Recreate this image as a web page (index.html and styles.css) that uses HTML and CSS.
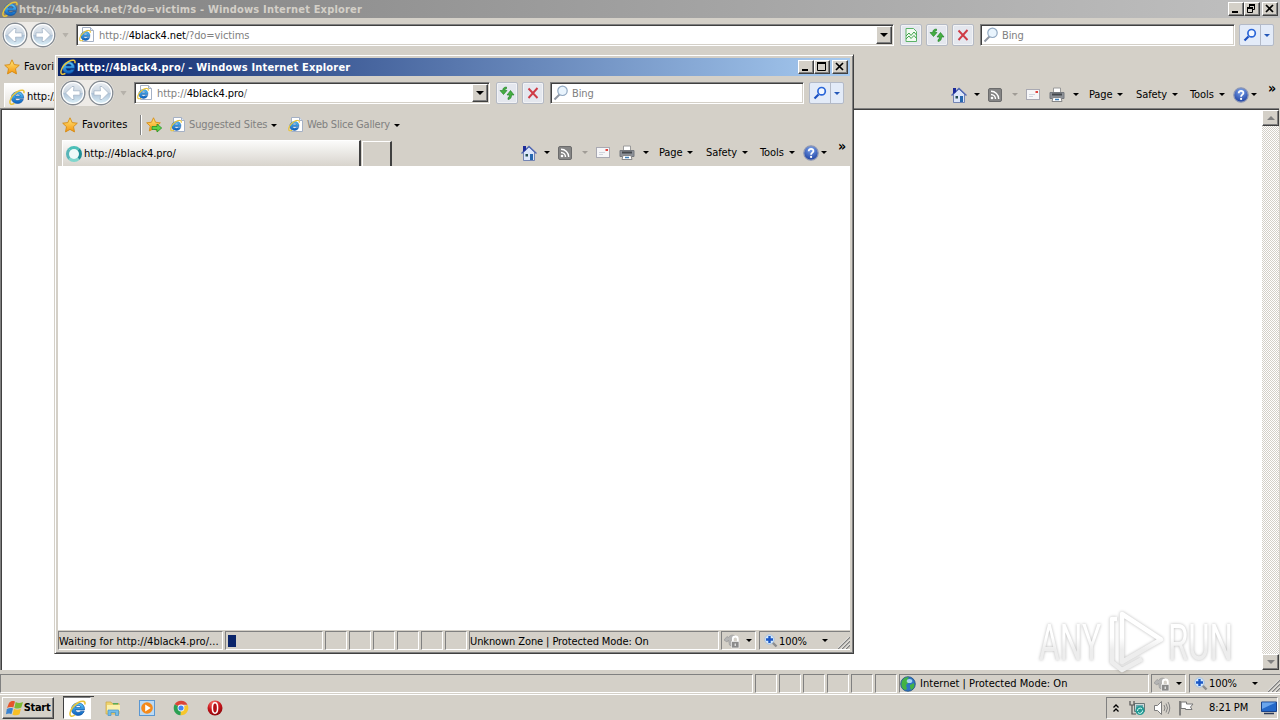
FILE: index.html
```html
<!DOCTYPE html>
<html lang="en">
<head>
  <meta charset="UTF-8">
  <title>Desktop</title>
  <link rel="stylesheet" href="styles.css">
</head>
<body>
  <!-- icons -->
  <svg class="sprite" width="0" height="0">
    <defs>
      <linearGradient id="g-ie" x1="0" y1="0" x2="0" y2="1"><stop offset="0" stop-color="#5cc8fa"/><stop offset="1" stop-color="#0a5fbd"/></linearGradient>
      <linearGradient id="g-round" x1="0" y1="0" x2="0" y2="1"><stop offset="0" stop-color="#eceff3"/><stop offset=".48" stop-color="#ccd7e2"/><stop offset=".52" stop-color="#b0c4d8"/><stop offset="1" stop-color="#e2f5fc"/></linearGradient>
      <linearGradient id="g-star" x1="0" y1="0" x2="0" y2="1"><stop offset="0" stop-color="#ffe97c"/><stop offset="1" stop-color="#f5940c"/></linearGradient>
      <linearGradient id="g-mark" gradientUnits="userSpaceOnUse" x1="0" y1="5" x2="0" y2="66"><stop offset=".45" stop-color="#fff"/><stop offset=".65" stop-color="#ededed"/></linearGradient>
      <radialGradient id="g-help" cx=".5" cy=".25" r=".8"><stop offset="0" stop-color="#7da5ee"/><stop offset="1" stop-color="#173a9c"/></radialGradient>
      <radialGradient id="g-opera" cx=".4" cy=".2" r=".9"><stop offset="0" stop-color="#ff7a70"/><stop offset=".5" stop-color="#c8151b"/><stop offset="1" stop-color="#7d0308"/></radialGradient>
    </defs>
    <symbol id="i-ie" viewBox="0 0 16 16">
      <path d="M14.600 9.300H6c.1 1.500 1.200 2.300 2.700 2.300 1.100 0 1.800-.4 2.300-1.100h3.300c-.9 2.600-3 4-5.800 4-3.700 0-6.100-2.400-6.100-5.700 0-3.600 2.600-6 6.300-6s6.100 2.500 5.900 6.500zM6.100 7h5.100c-.2-1.200-1.100-1.900-2.500-1.900S6.400 5.800 6.100 7z" fill="url(#g-ie)" stroke="#0b4fa0" stroke-width=".6"/>
      <path d="M14.800 4.300c.5-1.500.2-2.700-1-3C11.300.5 6.500 2.900 3.300 7.100.8 10.700.2 14.100 1.800 15c1 .5 2.300.1 3.600-.7" fill="none" stroke="#e9c43a" stroke-width="1.500"/>
    </symbol>
    <symbol id="i-iepage" viewBox="0 0 16 16">
      <path d="M3.500.5h8l3 3v11h-11z" fill="#fff" stroke="#a5b1c5"/>
      <path d="M11.500.5v3h3" fill="#dde6f2" stroke="#a5b1c5"/>
      <use href="#i-ie" x="0" y="2.500" width="12" height="12"/>
    </symbol>
    <symbol id="i-back" viewBox="0 0 26 26">
      <circle cx="13" cy="13" r="11.800" fill="url(#g-round)" stroke="#858b92" stroke-width="1.400"/>
      <circle cx="13" cy="13" r="10.500" fill="none" stroke="#fff" stroke-width="1.200"/>
      <path d="M5.500 13L12 6.500h2l-.5 4.300H20v4.400h-6.500l.5 4.300h-2z" fill="#fff" stroke="#a3b4c6" stroke-width=".8"/>
    </symbol>
    <symbol id="i-star" viewBox="0 0 16 16">
      <path d="M8 .8l2.200 4.800 5.100.6-3.800 3.500 1 5.200L8 12.400l-4.500 2.500 1-5.200L.7 6.200l5.100-.6z" fill="url(#g-star)" stroke="#d58a13" stroke-width=".9"/>
    </symbol>
    <symbol id="i-addstar" viewBox="0 0 16 16">
      <use href="#i-star" x="0" y="0" width="15" height="15"/>
      <path d="M6 9.500h5V7l4.700 4-4.700 4v-2.500H6z" fill="#5ed14a" stroke="#25902a" stroke-width=".8"/>
    </symbol>
    <symbol id="i-mag" viewBox="0 0 16 16">
      <path d="M1.500 14.500L6.500 9.500" stroke="#9098a4" stroke-width="2"/>
      <circle cx="9.500" cy="5.800" r="4.700" fill="#e9f4fd" stroke="#92a9c2" stroke-width="1.200"/>
    </symbol>
    <symbol id="i-go" viewBox="0 0 14 14">
      <path d="M1.500 12.500L5.500 8.500" stroke="#1b4fc0" stroke-width="2.200"/>
      <circle cx="8.600" cy="5.200" r="3.700" fill="#f2f7ff" stroke="#2a66d8" stroke-width="1.700"/>
    </symbol>
    <symbol id="i-refresh" viewBox="0 0 16 16">
      <path d="M7.500 2C5 2 3.800 3.200 3.700 5.500H1L4.500 9.500 8 5.500H5.800c.1-1.100.6-1.700 1.700-1.800z" fill="#45ae42" stroke="#1b7d20" stroke-width=".6"/>
      <path d="M9 14.500c2.400-.2 3.500-1.600 3.500-4.500H15l-3.500-4.500L8 10h2.400c0 1.500-.3 2.300-1.400 2.700z" fill="#45ae42" stroke="#1b7d20" stroke-width=".6"/>
    </symbol>
    <symbol id="i-stop" viewBox="0 0 16 16">
      <path d="M3.500 3.500l9 9.500M12.500 3L3.500 13" stroke="#cf3b45" stroke-width="1.900" fill="none"/>
    </symbol>
    <symbol id="i-compat" viewBox="0 0 16 16">
      <path d="M3 1.500h7.500L13.500 4.500v10H3z" fill="#f2faf2" stroke="#5bb267"/>
      <path d="M3 9l3-3 2 2.500L11 5l2.500 3M3 12l3-3 2 2.500L11 8.500l2.500 3" fill="none" stroke="#3da24a"/>
    </symbol>
    <symbol id="i-home" viewBox="0 0 16 16">
      <path d="M2.500 7v8.500h11V7L8 2z" fill="#dce6fa" stroke="#5b6ea8" stroke-width=".8"/>
      <path d="M.5 8.500L8 1.500l7.500 7" fill="none" stroke="#5269b4" stroke-width="1.400"/>
      <path d="M2 1h3v4L2 7z" fill="#1c2b9a"/>
      <path d="M4.500 9h2.500v2.500H4.500z" fill="#234d50"/><path d="M9 9h3v6H9z" fill="#2667b0"/>
    </symbol>
    <symbol id="i-rss" viewBox="0 0 14 14">
      <rect x=".5" y=".5" width="13" height="13" rx="1.500" fill="#858585" stroke="#6c6c6c"/>
      <circle cx="4" cy="10" r="1.300" fill="#fff"/>
      <path d="M3 6.500a4.500 4.500 0 0 1 4.500 4.500M3 3.300A7.700 7.700 0 0 1 10.700 11" fill="none" stroke="#fff" stroke-width="1.400"/>
    </symbol>
    <symbol id="i-mail" viewBox="0 0 14 11">
      <rect x=".5" y=".5" width="13" height="10" fill="#f6f6f8" stroke="#a9a9b2"/>
      <path d="M3 5.500h6M3 7.500h4" stroke="#d0d4dd"/><path d="M9.500 2h2.500v2H9.500z" fill="#e0433d"/>
    </symbol>
    <symbol id="i-print" viewBox="0 0 16 16">
      <path d="M4.500 1h7v5h-7z" fill="#fff" stroke="#9a9a9a"/>
      <path d="M1 5.500h14v6H1z" fill="#8d9198" stroke="#75797f"/><path d="M3 6.500h10v2H3z" fill="#44484d"/>
      <path d="M4 10.500h8l1 4H3z" fill="#fff" stroke="#888"/><path d="M6 12.500h4" stroke="#4080b8" stroke-width="1.500"/>
    </symbol>
    <symbol id="i-help" viewBox="0 0 16 16">
      <circle cx="8" cy="8" r="7.200" fill="url(#g-help)" stroke="#8d97b5" stroke-width="1.200"/>
      <path d="M5.700 6.300c0-3.200 4.900-3 4.700-.2C10.300 7.700 8.100 7.700 8.100 9.700" fill="none" stroke="#fff" stroke-width="1.800"/><circle cx="8.100" cy="11.900" r="1.100" fill="#fff"/>
    </symbol>
    <symbol id="i-lock" viewBox="0 0 16 16">
      <path d="M0 7l3-3.500 1.500 1C6 2 9 1.500 11 3L9 5 7 8l.5 5-2-1-1-5L3 9z" fill="#b4b4b4" stroke="#999" stroke-width=".7"/>
      <path d="M8.800 9V6a2.500 2.500 0 0 1 5 0V9" fill="none" stroke="#fff" stroke-width="1.800"/>
      <path d="M7.500 8.500h7.500V15H7.500z" fill="#8a8a8a" stroke="#f4f4f4" stroke-width=".7"/><path d="M11.200 10.500v2.500" stroke="#fff"/>
    </symbol>
    <symbol id="i-zoom" viewBox="0 0 14 14">
      <path d="M8 8l4.500 4.500" stroke="#8d8d8d" stroke-width="2.400"/>
      <circle cx="5.500" cy="5.500" r="4.700" fill="#d6eafc" stroke="#9bbbe0" stroke-width=".8"/>
      <path d="M5.500 2v7M2 5.500h7" stroke="#1c58c5" stroke-width="2.400"/>
    </symbol>
    <symbol id="i-globe" viewBox="0 0 16 16">
      <circle cx="8" cy="8" r="7.300" fill="#2f74c4" stroke="#1d4e7d" stroke-width=".8"/>
      <path d="M2 5c2-4 5-4 7-3.500L7 4l2 2-3 3 1 4-2 1C1 12 1 8 2 5zM10 9l4-2c1 4-1 6-3 7l-1-3z" fill="#43b344"/>
      <ellipse cx="9.500" cy="5" rx="2.800" ry="2" fill="#c6ecff" opacity=".8"/>
    </symbol>
    <symbol id="i-grip" viewBox="0 0 12 12">
      <path d="M0 12L12 0M4 12l8-8M8 12l4-4" stroke="#808080" stroke-width="1.300"/>
      <path d="M-1.200 12L12-1.200M2.800 12l9.200-9.200M6.800 12l5.200-5.200" stroke="#fff" stroke-width=".7"/>
    </symbol>
    <symbol id="i-min" viewBox="0 0 12 10"><path d="M2 8h6" stroke="#000" stroke-width="2"/></symbol>
    <symbol id="i-max" viewBox="0 0 12 10"><path d="M1.500 1v7.500h8V1M1 1h9" fill="none" stroke="#000"/><path d="M1 1h9" stroke="#000" stroke-width="2"/></symbol>
    <symbol id="i-restore" viewBox="0 0 12 10"><path d="M3.500 3V.5h5v5H7M1.500 3.500h5v5h-5z" fill="none" stroke="#000"/><path d="M3 1h6M1 4h6" stroke="#000" stroke-width="2"/></symbol>
    <symbol id="i-close" viewBox="0 0 12 10"><path d="M2 1l7 7M9 1L2 8" stroke="#000" stroke-width="1.700"/></symbol>
    <symbol id="i-flag" viewBox="0 0 18 18">
      <path d="M3 4c2-2 3.500-2.500 6-1.500L7.300 8.500C5 7.600 3 8 1 9z" fill="#e6562b"/><path d="M9.700 3C12 4.300 14 4.500 17 3L15.300 8.500C13 10 11 9.800 8.300 8.900z" fill="#7dba35"/>
      <path d="M.8 10C3 9 5 8.600 7 9.500L5.500 15C3.500 14 2 14.300 0 15.300z" fill="#3a83d0"/><path d="M8 10c2.500.9 4.500 1 7-.5l-1.500 5.700c-2 1.500-4.500 1.300-7 .5z" fill="#f8bf25"/>
    </symbol>
    <symbol id="i-folder" viewBox="0 0 16 16">
      <path d="M1 2h5l1 1.500h7V14H1z" fill="#efd36d" stroke="#c9a745" stroke-width=".7"/><path d="M2 5h13v6H2z" fill="#faf0ad"/>
      <path d="M3 15.500v-5.500h10.500v5.500h-3V12.500H6v3z" fill="#72bce8" stroke="#4792c4" stroke-width=".7"/><path d="M8 3h5v1.500H8z" fill="#55aa5d"/>
    </symbol>
    <symbol id="i-wmp" viewBox="0 0 16 16">
      <rect x=".5" y=".5" width="15" height="15" fill="#bcdaf4" stroke="#5a97d2"/>
      <circle cx="8" cy="8" r="5.800" fill="#f58a1b"/><path d="M6.200 4.500v7l5.500-3.500z" fill="#fff"/>
    </symbol>
    <symbol id="i-chrome" viewBox="0 0 16 16">
      <path d="M8 8L1.700 4.300A7.300 7.300 0 0 1 14.500 4.700H8z" fill="#db4437"/>
      <path d="M8 8l6.500-3.300A7.300 7.300 0 0 1 7.500 15.300z" fill="#f6c62b"/>
      <path d="M8 8l-.5 7.300A7.300 7.300 0 0 1 1.700 4.300z" fill="#2ba052"/>
      <circle cx="8" cy="8" r="3.400" fill="#fff"/><circle cx="8" cy="8" r="2.600" fill="#4285f4"/>
    </symbol>
    <symbol id="i-opera" viewBox="0 0 16 16">
      <circle cx="8" cy="8" r="7.500" fill="url(#g-opera)"/><ellipse cx="8" cy="8" rx="2.600" ry="5.200" fill="#b30f15" stroke="#fff" stroke-width="1.500"/>
    </symbol>
    <symbol id="i-net" viewBox="0 0 16 16">
      <path d="M5.500 3.500h10v8h-10z" fill="#cfdada" stroke="#687777"/><path d="M7 5h7v5H7z" fill="#68a7ae"/>
      <path d="M1 1v4h4V1M3 5v9h4" fill="none" stroke="#555" stroke-width="1.200"/>
      <circle cx="11" cy="10.500" r="4.500" fill="#259a94"/><path d="M8.500 11a2.600 2.600 0 0 1 4.500-2M13.500 10.500a2.600 2.600 0 0 1-4.500 2" stroke="#d9fffa" fill="none"/>
    </symbol>
    <symbol id="i-sound" viewBox="0 0 18 16">
      <path d="M1.500 5.500h3l4-4v13l-4-4h-3z" fill="#fff" stroke="#7c7c7c"/><path d="M11 5q2 3 0 6M13 3.500q3 4.500 0 9M15 2q3.500 6 0 12" fill="none" stroke="#838383"/>
    </symbol>
    <symbol id="i-action" viewBox="0 0 16 16">
      <path d="M2 1v14.500" stroke="#666" stroke-width="1.500"/><path d="M3 2h5.500v2H15l-2.500 3L14 9.500H7.500v-1H3z" fill="#fff" stroke="#777"/>
    </symbol>
    <symbol id="i-monitor" viewBox="0 0 16 14">
      <path d="M.5 1h15v9.500H.5z" fill="#2468c8" stroke="#19428a"/><path d="M1 1.500h14L1 8z" fill="#6aa5ec"/><path d="M3 12.500h10" stroke="#2a3958" stroke-width="1.500"/>
    </symbol>
  </svg>

  <div class="desktop">
    <div class="window window-back">
      <div class="titlebar inactive">
        <svg class="i16"><use href="#i-ie"/></svg>
        <span class="title">http://4black4.net/?do=victims - Windows Internet Explorer</span>
        <div class="win-btns">
          <button><svg><use href="#i-min"/></svg></button><button><svg><use href="#i-restore"/></svg></button><button class="close"><svg><use href="#i-close"/></svg></button>
        </div>
      </div>
      <div class="nav">
        <div class="travel"><svg><use href="#i-back"/></svg><svg class="fwd"><use href="#i-back"/></svg></div>
        <i class="recent"></i>
        <div class="field address">
          <svg class="i16"><use href="#i-iepage"/></svg>
          <span class="url">http://<b>4black4.net</b>/?do=victims</span>
          <button class="drop"><i class="arrow"></i></button>
        </div>
        <button class="tool"><svg><use href="#i-compat"/></svg></button>
        <button class="tool"><svg><use href="#i-refresh"/></svg></button>
        <button class="tool"><svg><use href="#i-stop"/></svg></button>
        <div class="field search"><svg class="i16"><use href="#i-mag"/></svg><span>Bing</span></div>
        <div class="go"><span><svg><use href="#i-go"/></svg></span><span><i class="arrow blue"></i></span></div>
      </div>
      <div class="favorites">
        <svg class="i16"><use href="#i-star"/></svg><span class="fav-label">Favorites</span>
      </div>
      <div class="tabrow">
        <div class="tab"><svg class="i16"><use href="#i-ie"/></svg><span>http://4black4.net/?do=victims</span></div>
        <div class="commands">
          <div class="cmd home"><svg class="i16"><use href="#i-home"/></svg><i class="arrow"></i></div>
          <div class="cmd rss"><svg><use href="#i-rss"/></svg><i class="arrow dim"></i></div>
          <div class="cmd mail"><svg><use href="#i-mail"/></svg></div>
          <div class="cmd print"><svg class="i16"><use href="#i-print"/></svg><i class="arrow"></i></div>
          <div class="cmd page"><span>Page</span><i class="arrow"></i></div>
          <div class="cmd safety"><span>Safety</span><i class="arrow"></i></div>
          <div class="cmd tools"><span>Tools</span><i class="arrow"></i></div>
          <div class="cmd help"><svg class="i16"><use href="#i-help"/></svg><i class="arrow"></i></div>
          <span class="more">»</span>
        </div>
      </div>
      <div class="view">
        <div class="scrollbar"><button><i class="arrow up"></i></button><button><i class="arrow grey"></i></button></div>
      </div>
      <div class="status">
        <div class="cell message"></div>
        <div class="cell small"></div><div class="cell small"></div><div class="cell small"></div><div class="cell small"></div><div class="cell small"></div><div class="cell small"></div>
        <div class="cell zone"><svg class="i16"><use href="#i-globe"/></svg><span>Internet | Protected Mode: On</span></div>
        <div class="cell lock"><svg class="i16"><use href="#i-lock"/></svg><i class="arrow"></i></div>
        <div class="cell zoom"><svg class="i14"><use href="#i-zoom"/></svg><span>100%</span><i class="arrow"></i></div>
        <svg class="grip"><use href="#i-grip"/></svg>
      </div>
    </div>

    <svg class="watermark" viewBox="0 0 200 70">
      <g fill="url(#g-mark)">
        <text x="4" y="55" textLength="62" lengthAdjust="spacingAndGlyphs">ANY</text>
        <text x="133" y="55" textLength="65" lengthAdjust="spacingAndGlyphs">RUN</text>
      </g>
      <path d="M87 9v48l39-22.500zM82 14h-5v43l10 8 20-11" fill="none" stroke="url(#g-mark)" stroke-width="4.500" stroke-linejoin="round"/>
    </svg>

    <div class="window window-front">
      <div class="titlebar active">
        <svg class="i16"><use href="#i-ie"/></svg>
        <span class="title">http://4black4.pro/ - Windows Internet Explorer</span>
        <div class="win-btns">
          <button><svg><use href="#i-min"/></svg></button><button><svg><use href="#i-max"/></svg></button><button class="close"><svg><use href="#i-close"/></svg></button>
        </div>
      </div>
      <div class="nav">
        <div class="travel"><svg><use href="#i-back"/></svg><svg class="fwd"><use href="#i-back"/></svg></div>
        <i class="recent"></i>
        <div class="field address">
          <svg class="i16"><use href="#i-iepage"/></svg>
          <span class="url">http://<b>4black4.pro</b>/</span>
          <button class="drop"><i class="arrow"></i></button>
        </div>
        <button class="tool"><svg><use href="#i-refresh"/></svg></button>
        <button class="tool"><svg><use href="#i-stop"/></svg></button>
        <div class="field search"><svg class="i16"><use href="#i-mag"/></svg><span>Bing</span></div>
        <div class="go"><span><svg><use href="#i-go"/></svg></span><span><i class="arrow blue"></i></span></div>
      </div>
      <div class="favorites">
        <svg class="i16"><use href="#i-star"/></svg><span class="fav-label">Favorites</span>
        <i class="divider"></i>
        <svg class="i16 add"><use href="#i-addstar"/></svg>
        <div class="link suggested"><svg class="i16"><use href="#i-iepage"/></svg><span>Suggested Sites</span><i class="arrow"></i></div>
        <div class="link gallery"><svg class="i16"><use href="#i-iepage"/></svg><span>Web Slice Gallery</span><i class="arrow"></i></div>
      </div>
      <div class="tabrow">
        <div class="tab"><i class="spinner"></i><span>http://4black4.pro/</span></div>
        <div class="newtab"></div>
        <div class="commands">
          <div class="cmd home"><svg class="i16"><use href="#i-home"/></svg><i class="arrow"></i></div>
          <div class="cmd rss"><svg><use href="#i-rss"/></svg><i class="arrow dim"></i></div>
          <div class="cmd mail"><svg><use href="#i-mail"/></svg></div>
          <div class="cmd print"><svg class="i16"><use href="#i-print"/></svg><i class="arrow"></i></div>
          <div class="cmd page"><span>Page</span><i class="arrow"></i></div>
          <div class="cmd safety"><span>Safety</span><i class="arrow"></i></div>
          <div class="cmd tools"><span>Tools</span><i class="arrow"></i></div>
          <div class="cmd help"><svg class="i16"><use href="#i-help"/></svg><i class="arrow"></i></div>
          <span class="more">»</span>
        </div>
      </div>
      <div class="view"></div>
      <div class="status">
        <div class="cell message"><span>Waiting for http://4black4.pro/...</span></div>
        <div class="cell progress"><i></i></div>
        <div class="cell small"></div><div class="cell small"></div><div class="cell small"></div><div class="cell small"></div><div class="cell small"></div><div class="cell small"></div>
        <div class="cell zone"><span>Unknown Zone | Protected Mode: On</span></div>
        <div class="cell lock"><svg class="i16"><use href="#i-lock"/></svg><i class="arrow"></i></div>
        <div class="cell zoom"><svg class="i14"><use href="#i-zoom"/></svg><span>100%</span><i class="arrow"></i></div>
        <svg class="grip"><use href="#i-grip"/></svg>
      </div>
    </div>

    <div class="taskbar">
      <button class="start"><svg><use href="#i-flag"/></svg><span>Start</span></button>
      <div class="task-ie"><div><svg><use href="#i-ie"/></svg></div></div>
      <div class="pinned">
        <svg class="i16"><use href="#i-folder"/></svg>
        <svg class="i16"><use href="#i-wmp"/></svg>
        <svg class="i16"><use href="#i-chrome"/></svg>
        <svg class="i16"><use href="#i-opera"/></svg>
      </div>
      <div class="tray">
        <svg class="chev" viewBox="0 0 6 8"><path d="M.5 3.500L3 1l2.500 2.500M.5 7.500L3 5l2.500 2.500" fill="none" stroke="#000" stroke-width="1.300"/></svg>
        <svg class="i16"><use href="#i-net"/></svg>
        <svg class="sound"><use href="#i-sound"/></svg>
        <svg class="i16"><use href="#i-action"/></svg>
        <span class="clock">8:21 PM</span>
        <svg class="monitor"><use href="#i-monitor"/></svg>
      </div>
    </div>
  </div>
</body>
</html>
```
FILE: styles.css
```css
:root {
  --face: #d4d0c8;
  --shadow: #808080;
  --dark: #404040;
}

* {
  box-sizing: border-box;
}

body {
  margin: 0;
  font-family: "DejaVu Sans Condensed", "DejaVu Sans", sans-serif;
  font-stretch: condensed;
  font-size: 11px;
  line-height: 14px;
  letter-spacing: -0.1px;
  color: #000;
}

svg {
  display: block;
  flex: none;
}

.sprite {
  position: absolute;
}

.desktop {
  position: relative;
  width: 1280px;
  height: 720px;
  overflow: hidden;
  background: var(--face);
}

span {
  white-space: nowrap;
}

button {
  display: flex;
  align-items: center;
  justify-content: center;
  padding: 0;
  border: 1px solid;
  border-color: #fff var(--dark) var(--dark) #fff;
  box-shadow: inset -1px -1px var(--shadow);
  background: var(--face);
  font: inherit;
}

.i16 {
  width: 16px;
  height: 16px;
}

.i14 {
  width: 14px;
  height: 14px;
}

.arrow {
  flex: none;
  width: 0;
  height: 0;
  border: 3px solid transparent;
  border-top-color: #000;
  border-bottom-width: 0;
}

.arrow.dim { border-top-color: #a09c96; }
.arrow.blue { border-top-color: #2458b8; }
.arrow.grey { border-width: 4px 4px 0; border-top-color: #808080; }
.arrow.up { border-width: 0 4px 4px; border-bottom-color: #808080; }

/* windows */
.window {
  position: absolute;
  display: flex;
  flex-direction: column;
  background: var(--face);
}

.window-back {
  left: 0;
  top: 0;
  width: 1280px;
  height: 695px;
}

.window-front {
  left: 54px;
  top: 54px;
  width: 800px;
  height: 600px;
  padding: 3px;
  border: 1px solid;
  border-color: var(--face) var(--dark) var(--dark) var(--face);
  box-shadow: inset 1px 1px #fff, inset -1px -1px var(--shadow);
}

.titlebar {
  display: flex;
  align-items: center;
  flex: none;
  height: 18px;
  padding: 0 2px;
}

.titlebar.active {
  background: linear-gradient(90deg, #0a246a, #a6caf0);
  color: #fff;
}

.titlebar.inactive {
  background: linear-gradient(90deg, #808080, #c0c0c0);
  color: #d4d0c8;
}

.title {
  padding-top: 1px;
  margin-left: 1px;
  font-weight: bold;
  letter-spacing: 0.18px;
}

.win-btns {
  display: flex;
  margin-left: auto;
}

.win-btns button {
  width: 16px;
  height: 14px;
}

.win-btns .close {
  margin-left: 2px;
}

.win-btns svg {
  width: 12px;
  height: 10px;
}

/* navigation row */
.nav {
  display: flex;
  align-items: center;
  flex: none;
  height: 34px;
  padding-left: 2px;
}

.travel {
  display: flex;
  gap: 2px;
  border-radius: 14px;
  background: #eeebe7;
}

.travel svg {
  width: 26px;
  height: 26px;
}

.travel .fwd {
  transform: scaleX(-1);
}

.recent {
  width: 7px;
  height: 5px;
  margin: 0 7px 0 6px;
  background: #b5b1aa;
  clip-path: polygon(0 0, 100% 0, 50% 100%);
}

.field {
  display: flex;
  align-items: center;
  height: 22px;
  border: 1px solid;
  border-color: var(--shadow) #fff #fff var(--shadow);
  box-shadow: inset 1px 1px var(--dark), inset -1px -1px var(--face);
  background: #fff;
  color: #808080;
}

.field span {
  padding-top: 2px;
}

.address {
  flex: 1;
  margin-right: 6px;
  padding: 0 1px 0 2px;
}

.url {
  flex: 1;
  margin-left: 4px;
}

.url b {
  font-weight: normal;
  color: #000;
}

.drop {
  width: 16px;
  height: 18px;
}

.drop .arrow {
  border-width: 4px 4px 0;
}

.tool {
  width: 22px;
  height: 22px;
  margin-right: 4px;
  border: 1px solid #b5bac4;
  border-radius: 2px;
  background: #e4e7ee;
  box-shadow: inset 0 0 0 1px #f2f3f6;
}

.tool svg {
  width: 16px;
  height: 16px;
}

.search {
  width: 255px;
  margin-left: 2px;
  padding-left: 2px;
}

.search span {
  margin-left: 3px;
}

.window-front .search {
  width: 254px;
  margin-right: 1px;
}

.go {
  display: flex;
  width: 35px;
  height: 22px;
  margin: 0 6px 0 4px;
  border: 1px solid #b3bac8;
  border-radius: 2px;
  background: #e3ebf8;
}

.go span {
  display: flex;
  flex: 1;
  align-items: center;
  justify-content: center;
}

.go span:first-child {
  flex: none;
  width: 21px;
  border-right: 1px solid #b3bac8;
}

.go svg {
  width: 14px;
  height: 14px;
}

/* favorites row */
.favorites {
  display: flex;
  align-items: center;
  flex: none;
  height: 29px;
  padding-left: 4px;
}

.fav-label {
  width: 46px;
  margin-left: 4px;
  letter-spacing: 0.1px;
}

.divider {
  width: 2px;
  height: 20px;
  margin-left: 12px;
  border-left: 1px solid var(--shadow);
  border-right: 1px solid #fff;
}

.add {
  margin-left: 4px;
}

.link {
  display: flex;
  align-items: center;
  padding-top: 1px;
  color: #808080;
}

.link span {
  margin-left: 3px;
}

.link .arrow {
  margin-left: auto;
}

.suggested {
  width: 107px;
  margin-left: 8px;
}

.gallery {
  width: 112px;
  margin-left: 11px;
  letter-spacing: -0.2px;
}

/* tabs and command bar */
.tabrow {
  display: flex;
  flex: none;
  height: 27px;
  padding-left: 4px;
}

.tab {
  display: flex;
  align-items: center;
  width: 299px;
  margin-top: 1px;
  padding: 1px 0 0 3px;
  border-top: 1px solid #fff;
  border-left: 1px solid #fff;
  border-right: 2px solid var(--dark);
  background: linear-gradient(#fbfbfa, #d8d4cd);
}

.window-back .tab {
  margin: 2px 0 1px;
  padding: 2px 0 0 4px;
  background: linear-gradient(#fff, #e6e3de);
}

.tab span {
  margin-left: 2px;
}

.window-front .tab span {
  letter-spacing: 0;
}

.spinner {
  flex: none;
  width: 16px;
  height: 16px;
  border: 3px solid #2fa5a0;
  border-color: #4cc0b8 #1e8f96 #7fd6cd #58b5b8;
  border-radius: 50%;
  background: #eefaf9;
}

.newtab {
  width: 30px;
  margin: 2px 0 0 1px;
  border: 1px solid #fff;
  border-right: 2px solid var(--dark);
  border-bottom: 0;
}

.commands {
  display: flex;
  align-items: center;
  width: 329px;
  margin-left: auto;
}

.cmd {
  display: flex;
  align-items: center;
  justify-content: space-between;
  flex: none;
}

.home { width: 37px; padding-right: 8px; }
.rss { width: 38px; padding-right: 8px; }
.mail { width: 23px; }
.print { width: 40px; padding-right: 10px; }
.page { width: 47px; padding-right: 13px; }
.safety { width: 54px; padding-right: 12px; }
.tools { width: 43px; padding-right: 8px; }
.help { width: 34px; padding-right: 10px; }

.rss svg {
  width: 14px;
  height: 14px;
}

.mail svg {
  width: 14px;
  height: 11px;
}

.more {
  margin: 0 0 14px 1px;
  font-size: 14px;
  font-weight: bold;
}

/* page area */
.view {
  display: flex;
  justify-content: flex-end;
  flex: 1;
  background: #fff;
}

.window-back .view {
  margin-right: 1px;
  padding-top: 1px;
  border-top: 1px solid var(--shadow);
  border-left: 1px solid var(--shadow);
  box-shadow: inset 1px 1px var(--dark);
}

.scrollbar {
  display: flex;
  flex-direction: column;
  justify-content: space-between;
  width: 17px;
  background: repeating-conic-gradient(#fff 0 25%, #d4d0c8 0 50%) 0 0 / 2px 2px;
}

.scrollbar button {
  height: 16px;
}

/* status bar */
.status {
  display: flex;
  gap: 2px;
  flex: none;
  height: 20px;
  padding-top: 1px;
}

.window-back .status {
  height: 25px;
  padding: 3px 0 2px;
  border-top: 1px solid var(--face);
  border-bottom: 1px solid #fff;
}

.cell {
  display: flex;
  align-items: center;
  flex: none;
  height: 19px;
  border: 1px solid;
  border-color: var(--shadow) #fff #fff var(--shadow);
}

.window-front .cell span {
  padding-top: 2px;
}

.message {
  width: 165px;
  letter-spacing: 0.04px;
}

.window-back .message { width: 753px; }
.progress { width: 98px; padding-left: 2px; }
.small { width: 22px; }
.zone { width: 250px; }
.zone svg + span { margin-left: 4px; letter-spacing: 0.02px; }

.progress i {
  width: 8px;
  height: 12px;
  background: #0a246a;
}

.lock {
  width: 35px;
  justify-content: space-between;
  padding: 0 3px 0 2px;
}

.zoom {
  flex: 1;
  margin-left: 1px;
  padding-left: 4px;
  border-right: 0;
}

.zoom span {
  width: 43px;
  margin-left: 1px;
}

.grip {
  width: 12px;
  height: 12px;
  margin: 6px 0 0 -14px;
}

.watermark {
  position: absolute;
  left: 1035px;
  top: 605px;
  width: 200px;
  height: 70px;
  overflow: visible;
  filter: drop-shadow(0 0 1.5px rgba(0, 0, 0, 0.28));
  font: 50px "Roboto", sans-serif;
  letter-spacing: 0;
}

/* taskbar */
.taskbar {
  position: absolute;
  left: 0;
  top: 695px;
  display: flex;
  align-items: center;
  width: 1280px;
  height: 25px;
  padding-left: 2px;
  background: var(--face);
}

.start {
  width: 52px;
  height: 22px;
  font-weight: bold;
  letter-spacing: -0.3px;
}

.start svg {
  width: 18px;
  height: 18px;
}

.task-ie {
  width: 31px;
  height: 23px;
  margin-left: 9px;
  padding-right: 3px;
  border-top: 1px solid var(--dark);
}

.task-ie div {
  display: flex;
  align-items: center;
  justify-content: center;
  height: 22px;
  border: 1px solid;
  border-color: var(--shadow) #fff #fff var(--dark);
  background: #fff;
}

.task-ie svg {
  width: 17px;
  height: 17px;
}

.pinned {
  display: flex;
  gap: 18px;
  margin-left: 11px;
}

.tray {
  display: flex;
  align-items: center;
  width: 172px;
  height: 22px;
  margin: 0 2px 0 auto;
  padding-left: 6px;
  border: 1px solid;
  border-color: var(--shadow) #fff #fff var(--shadow);
}

.chev {
  width: 6px;
  height: 8px;
  margin-right: 10px;
}

.sound {
  width: 18px;
  height: 16px;
  margin: 0 7px 0 8px;
}

.clock {
  margin-left: 15px;
}

.monitor {
  width: 16px;
  height: 14px;
  margin-left: auto;
}
```
